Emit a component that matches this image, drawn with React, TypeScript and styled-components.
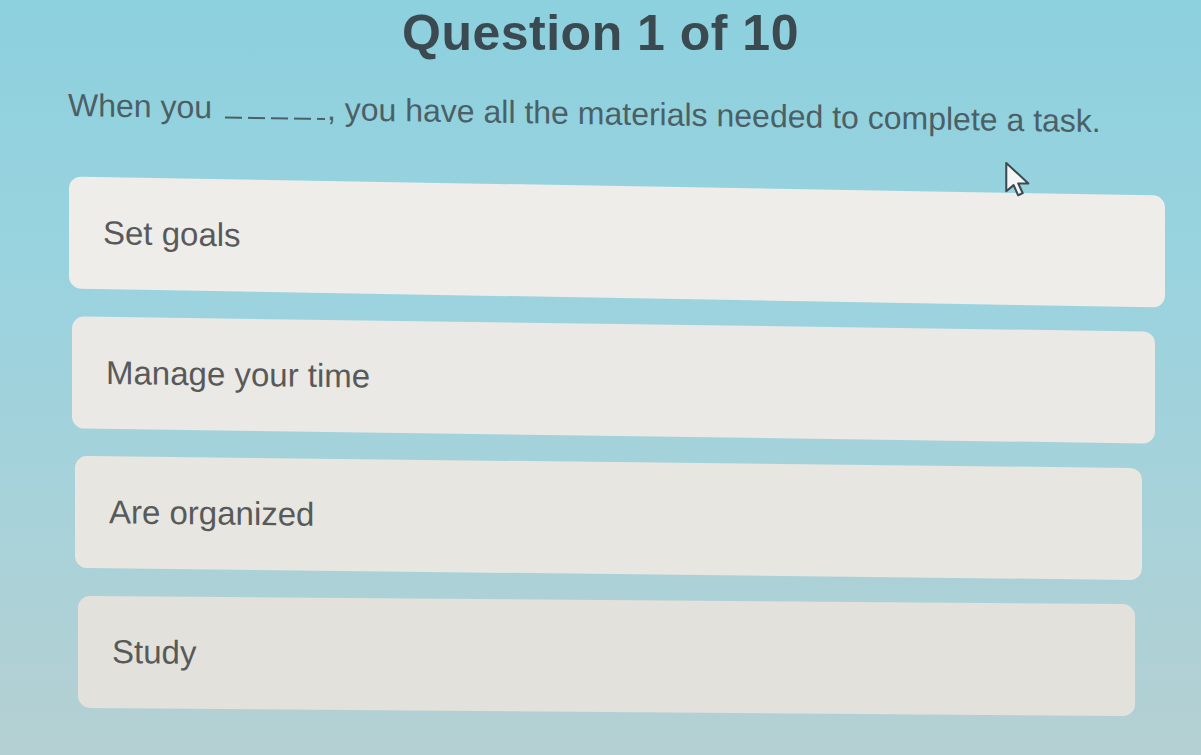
import React, { ReactElement } from 'react';
import styled, { createGlobalStyle } from 'styled-components';

const GlobalStyle = createGlobalStyle`
  html, body {
    margin: 0;
    padding: 0;
  }

  body {
    font-family: 'Liberation Sans', Arial, sans-serif;
  }
`;

const Page = styled.div`
  position: relative;
  display: flex;
  flex-direction: column;

  width: 1201px;
  height: 755px;
  overflow: hidden;
  box-sizing: border-box;
  padding-top: 4px;

  background: linear-gradient(180deg, #8dd0de 0%, #99d3df 35%, #a6d2da 65%, #b5d0d3 100%);
`;

const Title = styled.h1`
  margin: 0;

  color: #3b4a50;
  text-align: center;
  font-size: 50px;
  font-weight: 700;
  line-height: 58px;
  letter-spacing: 0.5px;
`;

const Question = styled.p`
  margin: 22px 0 0 68px;

  color: #4c5f65;
  font-size: 32px;
  line-height: 42px;
  transform: skewY(0.9deg);
  transform-origin: left center;
`;

const Blank = styled.span`
  display: inline-block;
  width: 100px;
  height: 2px;
  margin: 0 2px 0 4px;

  background: repeating-linear-gradient(90deg, #4c5f65 0 17px, transparent 17px 23px);
  vertical-align: baseline;
`;

const Options = styled.div`
  display: flex;
  flex-direction: column;
  gap: 26px;

  margin-top: 60px;
`;

const Option = styled.div<{ $left: number; $right: number; $bg: string; $tilt: number }>`
  display: flex;
  align-items: center;

  height: 112px;
  margin: 0 ${(p) => p.$right}px 0 ${(p) => p.$left}px;
  padding-left: 34px;
  box-sizing: border-box;
  border-radius: 12px;

  background: ${(p) => p.$bg};
  color: #585a5a;
  font-size: 33px;
  transform: skewY(${(p) => p.$tilt}deg);
`;

const Cursor = styled.svg`
  position: absolute;
  top: 160px;
  left: 1004px;
`;

const options = [
  { label: 'Set goals', left: 69, right: 36, bg: '#eeede9', tilt: 1 },
  { label: 'Manage your time', left: 72, right: 46, bg: '#eae9e5', tilt: 0.8 },
  { label: 'Are organized', left: 75, right: 59, bg: '#e7e6e1', tilt: 0.65 },
  { label: 'Study', left: 78, right: 66, bg: '#e2e1dc', tilt: 0.45 },
];

const App = (): ReactElement => {
  return (
    <Page>
      <GlobalStyle />
      <Title>Question 1 of 10</Title>
      <Question>
        When you <Blank />, you have all the materials needed to complete a task.
      </Question>
      <Options>
        {options.map((o) => (
          <Option key={o.label} $left={o.left} $right={o.right} $bg={o.bg} $tilt={o.tilt}>
            {o.label}
          </Option>
        ))}
      </Options>
      <Cursor width="34" height="40" viewBox="0 0 30 34">
        <path
          d="M2 2 L2 27 L8.5 21.5 L12.5 30.5 L16.5 28.5 L12.5 20 L21.5 20 Z"
          fill="#f4f6f6"
          stroke="#3a4a50"
          strokeWidth="1.8"
          strokeLinejoin="round"
        />
      </Cursor>
    </Page>
  );
};

export default App;
